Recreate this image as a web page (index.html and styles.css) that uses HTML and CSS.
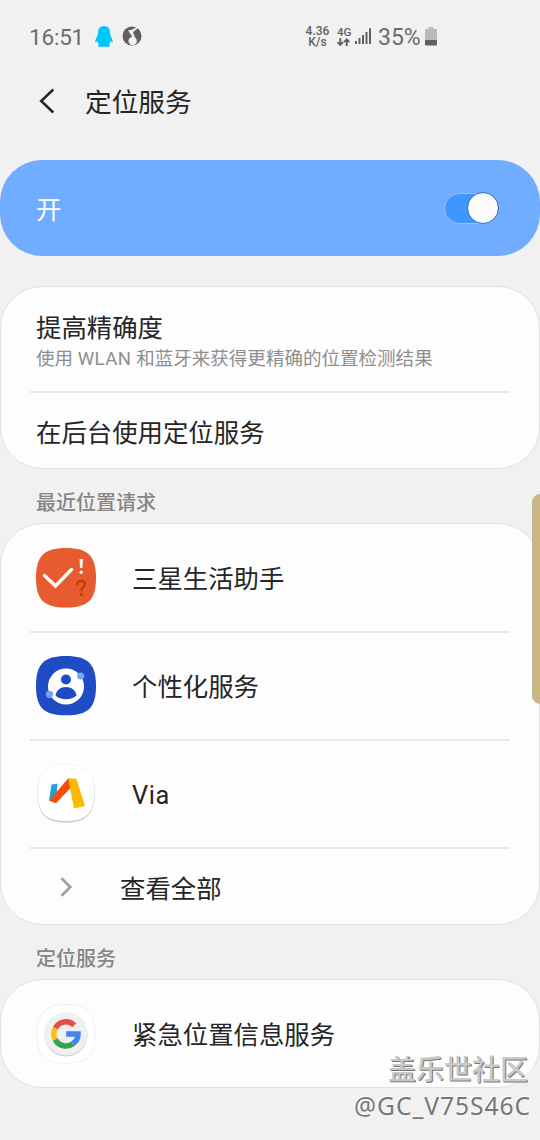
FILE: index.html
```html
<!DOCTYPE html>
<html lang="zh-CN">
<head>
<meta charset="utf-8">
<title>定位服务</title>
<link rel="stylesheet" href="styles.css">
</head>
<body>
<div class="screen">
  <header class="status">
    <span class="clock">16:51</span>
    <svg class="penguin" width="18" height="22" viewBox="0 0 18 22"><path fill="#00c8ff" d="M9 0C5 0 3 2.800 3 6.500C3 8.500 2.700 9 2.100 10.500C1 12.800 0 14.500.4 16C.7 16.800 1.500 15.800 2.200 15C2.600 16.500 3.300 17.800 4.200 18.600C2.500 19 2.400 20.700 4 20.800H14C15.600 20.700 15.500 19 13.800 18.600C14.700 17.800 15.400 16.500 15.800 15C16.500 15.800 17.300 16.800 17.600 16C18 14.500 17 12.800 15.900 10.500C15.300 9 15 8.500 15 6.500C15 2.800 13 0 9 0Z"/></svg>
    <svg class="music" width="20" height="20" viewBox="0 0 20 20"><circle cx="10" cy="10" r="9.500" fill="#606060"/><path fill="#f1f1f1" d="M6 4.500L10.500 3.500L14 1.500L14.800 .3L15.200 2.800L11 6L13 11.500A4.200 4.200 0 1 1 8.700 11.300L10.300 10.500Z"/></svg>
    <span class="speed"><span class="speed-line">4.36</span><span class="speed-line">K/s</span></span>
    <span class="network">
      <span class="net-name">4G</span>
      <svg width="13" height="9" viewBox="0 0 13 9" fill="none" stroke="#606060" stroke-width="1.900"><path d="M3.300 0V7M.6 4.200L3.300 7L6 4.200M9.700 8V1.400M7 4.200L9.700 1.400L12.400 4.200"/></svg>
    </span>
    <svg class="signal" width="17" height="17" viewBox="0 0 17 17" fill="#606060"><path d="M0 13h2v3H0zM3.500 10h2v6h-2zM7 7h2v9H7zM10.500 4h2v12h-2zM14 .3h2V16h-2z"/></svg>
    <span class="percent">35%</span>
    <svg class="battery" width="12" height="19" viewBox="0 0 12 19"><path fill="#bababa" d="M3.500 0h5v2H11a1 1 0 0 1 1 1v10H0V3a1 1 0 0 1 1-1h2.500z"/><path fill="#606060" d="M0 13h12v4.500a1 1 0 0 1-1 1H1a1 1 0 0 1-1-1z"/></svg>
  </header>

  <div class="titlebar">
    <svg width="16" height="26" viewBox="0 0 16 26" fill="none" stroke="#252525" stroke-width="2.500"><path d="M14.300 1.500L2.200 13L14.300 24.500"/></svg>
    <h1 class="title">定位服务</h1>
  </div>

  <div class="master">
    <span class="master-label">开</span>
    <span class="switch"><span class="knob"></span></span>
  </div>

  <section class="card">
    <div class="row row-detail">
      <div class="label">提高精确度</div>
      <div class="hint">使用 <span class="hint-latin">WLAN</span> 和蓝牙来获得更精确的位置检测结果</div>
    </div>
    <div class="row row-short">
      <div class="label">在后台使用定位服务</div>
    </div>
  </section>

  <h2 class="heading">最近位置请求</h2>
  <section class="card">
    <div class="row row-app">
      <svg class="icon icon-low" width="60" height="60" viewBox="0 0 60 60"><path fill="#e65b30" d="M30 0C52 0 60 8 60 30S52 59.500 30 59.500S0 52 0 30S8 0 30 0Z"/><path d="M8.500 27.500L19.500 38L35.500 21.500" fill="none" stroke="#fff6ee" stroke-width="3.500" stroke-linecap="round"/><path d="M43.500 11h3.400l-.5 9h-2.400z" fill="#fff6ee"/><circle cx="45.200" cy="24.200" r="1.700" fill="#fff6ee"/><path d="M41.200 37C41.400 31.800 49 31.800 49 36.300C49 39 45.300 39.200 45.300 43" fill="none" stroke="#c43e00" stroke-width="2.500"/><circle cx="45.300" cy="46.500" r="1.600" fill="#c43e00"/></svg>
      <div class="label">三星生活助手</div>
    </div>
    <div class="row row-app">
      <svg class="icon" width="60" height="60" viewBox="0 0 60 60"><path fill="#1f4bc4" d="M30 0C52 0 60 8 60 30S52 59.300 30 59.300S0 52 0 30S8 0 30 0Z"/><circle cx="30" cy="30.500" r="18" fill="#fff"/><circle cx="30" cy="23.500" r="5" fill="#1f4bc4"/><path d="M19.500 39.500C20.500 34 24.500 31 30 31S39.500 34 40.500 39.500C35.500 44.500 24.500 44.500 19.500 39.500Z" fill="#1f4bc4"/><circle cx="44.700" cy="20" r="3.600" fill="#75a2f4"/><circle cx="13.500" cy="38.300" r="3.600" fill="#75a2f4"/></svg>
      <div class="label">个性化服务</div>
    </div>
    <div class="row row-app">
      <svg class="icon" width="60" height="60" viewBox="0 0 60 60"><path fill="#c4c4c4" d="M30 1.500C50.500 1.500 58.500 9 58.500 29.500S50.500 58.500 30 58.500S1.500 50 1.500 29.500S9.500 1.500 30 1.500Z"/><path fill="#fff" stroke="#ececec" stroke-width=".5" d="M30 .7C50.500 .7 58.300 8 58.300 28.500S50.500 57 30 57S1.700 49 1.700 28.500S9.500 .7 30 .7Z"/><path fill="#1da1e2" d="M15.500 20.500L21.500 19.800L20.700 30L13 36.500Z"/><path fill="#f84b0a" d="M32.500 14L34.500 24L20 39.300L13 36.800Z"/><path fill="#ffb800" d="M32.500 14L40.500 15L49 42L38 44.500L34 24Z"/></svg>
      <div class="label label-latin">Via</div>
    </div>
    <div class="row row-more">
      <svg width="13" height="20" viewBox="0 0 13 20" fill="none" stroke="#a0a0a0" stroke-width="2.700"><path d="M1.500 1.200L10.300 10L1.500 18.800"/></svg>
      <div class="label">查看全部</div>
    </div>
  </section>

  <h2 class="heading">定位服务</h2>
  <section class="card">
    <div class="row row-app">
      <svg class="icon" width="60" height="60" viewBox="0 0 60 60"><path fill="#fff" stroke="#f0f0f0" d="M30 .5C51 .5 59 9 59 30S51 59.200 30 59.200S1 51 1 30S9 .5 30 .5Z"/><circle cx="30" cy="31" r="21.500" fill="#c9c9c9"/><circle cx="30" cy="29.700" r="21.700" fill="#f0f0f0"/><g fill="none" stroke-width="5.500"><path stroke="#e05243" d="M19.300 24.200A12 12 0 0 1 38.300 21.300"/><path stroke="#fbbc1f" d="M19.300 35.600A12 12 0 0 1 19.300 24.200"/><path stroke="#35a453" d="M37.200 39.500A12 12 0 0 1 19.300 35.600"/><path stroke="#4584ee" d="M30.200 30H42C42 34 40 37.500 37.200 39.500"/></g></svg>
      <div class="label">紧急位置信息服务</div>
    </div>
  </section>

  <div class="edge-handle"></div>
  <div class="watermark">
    <div class="mark-name">盖乐世社区</div>
    <div class="mark-user">@GC_V75S46C</div>
  </div>
</div>
</body>
</html>
```
FILE: styles.css
```css
* { box-sizing: border-box; }
body { margin: 0; background: #f1f1f1; }
svg { display: block; flex: none; }
.screen {
  position: relative;
  width: 540px;
  height: 1140px;
  overflow: hidden;
  background: #f1f1f1;
  color: #252525;
  font-family: Roboto, "Noto Sans CJK SC", sans-serif;
}

.status {
  display: flex;
  align-items: center;
  height: 73px;
  padding-left: 29px;
  color: #606060;
  white-space: nowrap;
}
.clock { width: 66px; font-size: 22.500px; letter-spacing: -.2px; color: #6c6c6c; }
.penguin { margin-right: 10px; }
.music { margin: -1px 162px 0 -1px; }
.speed {
  display: flex;
  flex-direction: column;
  align-items: center;
  width: 27px;
  margin-right: 6px;
  font-size: 12px;
  font-weight: 500;
}
.speed-line { height: 11px; line-height: 11px; }
.network { display: flex; flex-direction: column; width: 18px; }
.net-name { font-size: 11.500px; font-weight: 500; line-height: 12px; }
.signal { margin-right: 6px; }
.percent { width: 47px; padding-top: 1px; font-size: 23px; color: #6c6c6c; }

.titlebar {
  display: flex;
  align-items: center;
  gap: 30px;
  height: 56px;
  padding-left: 39px;
}
.title { margin: 0; padding-top: 3px; font-size: 26.700px; font-weight: 400; line-height: 38px; }

.master {
  display: flex;
  align-items: center;
  justify-content: space-between;
  height: 96px;
  margin: 31px 0 30px;
  padding: 0 41px 0 36px;
  border-radius: 42px;
  background: #70acff;
}
.master-label { padding-top: 4px; color: #fff; font-size: 25.400px; line-height: 36px; }
.switch {
  display: flex;
  align-items: center;
  justify-content: flex-end;
  width: 55px;
  height: 31px;
  border: 1px solid #91c2ff;
  border-radius: 16px;
  background: #4096ff;
}
.knob {
  flex: none;
  width: 32px;
  height: 32px;
  margin-right: -1px;
  border: 1px solid #1c6fbe;
  border-radius: 50%;
  background: #fcfcfc;
}

.card {
  padding: 0 29px;
  border: 1px solid #e1e1e1;
  border-radius: 42px;
  background: #fdfdfd;
}
.row { display: flex; padding-left: 6px; }
.row + .row { border-top: 2px solid #e8e8e8; }
.label { padding-top: 2px; font-size: 25.400px; line-height: 36px; }
.label-latin { letter-spacing: .6px; }
.row-detail { flex-direction: column; height: 104px; padding-top: 21px; }
.hint { color: #8e8e8e; font-size: 18.550px; line-height: 26px; white-space: nowrap; }
.hint-latin { letter-spacing: .5px; }
.row-short { align-items: center; height: 77px; }
.row-short .label { padding-top: 4px; }
.row-app { align-items: center; gap: 36px; height: 108px; }
.row-app:first-child { height: 107px; }
.icon-low { margin-top: 1px; }
.row-more { align-items: center; gap: 47px; height: 77px; padding-left: 30px; }
.row-more .label { padding-top: 4px; }

.heading {
  height: 54px;
  margin: 0;
  padding-left: 36px;
  color: #858585;
  font-size: 20px;
  font-weight: 500;
  line-height: 69px;
}

.edge-handle {
  position: absolute;
  top: 494px;
  right: -8px;
  width: 16px;
  height: 210px;
  border: 1px solid #bdb79b;
  border-radius: 8px;
  background: #c8b780;
}
.watermark { position: absolute; top: 1049px; right: 10px; text-align: right; }
.mark-name {
  padding-right: 2px;
  color: #c8c8c8;
  font-family: "Noto Sans CJK SC", sans-serif;
  font-size: 28px;
  font-weight: 500;
  line-height: 38px;
  text-shadow: 1px 1px #777, -1px -1px #fff;
}
.mark-user {
  margin-right: -1px;
  padding-top: 1px;
  color: #777;
  font-family: "Noto Sans", sans-serif;
  font-size: 24.500px;
  letter-spacing: 1px;
  line-height: 36px;
  text-shadow: -1px -1px #fff;
}
```
